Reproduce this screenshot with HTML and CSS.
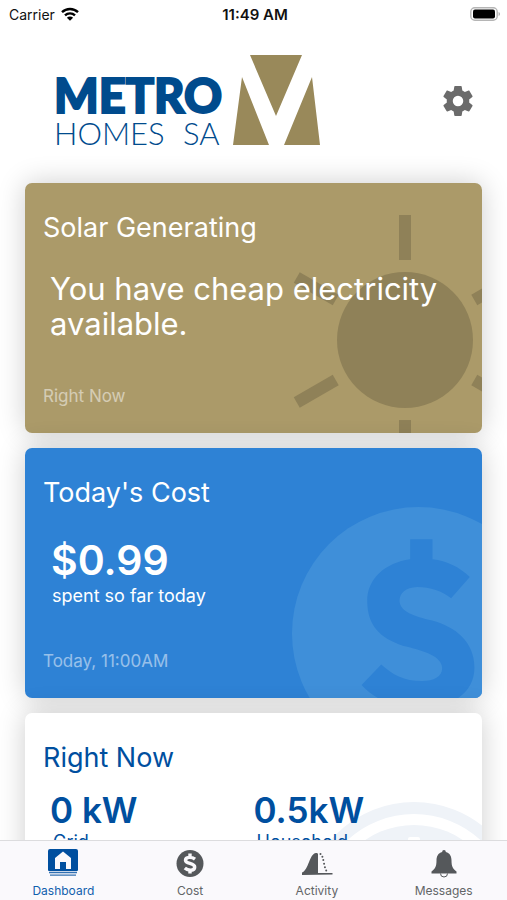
FILE: index.html
```html
<!DOCTYPE html>
<html lang="en">
<head>
<meta charset="utf-8">
<meta name="viewport" content="width=device-width, initial-scale=1">
<title>Metro Homes SA</title>
<link rel="stylesheet" href="styles.css">
</head>
<body>
<div class="status">
  <div class="status-left"><span>Carrier</span>
    <svg class="wifi" viewBox="0 0 18 14" aria-hidden="true"><g fill="none" stroke="#000" stroke-width="2.4"><path d="M1 5.2a11.5 11.5 0 0 1 16 0"/><path d="M4 8.4a7.2 7.2 0 0 1 10 0"/></g><path d="M5.9 10.7a4.4 4.4 0 0 1 6.2 0L9 13.8z"/></svg>
  </div>
  <div class="status-time">11:49 AM</div>
  <div class="status-right">
    <svg class="battery" viewBox="0 0 31 14" aria-hidden="true"><rect x=".8" y=".8" width="26.4" height="12.4" rx="4" fill="#fff" stroke="#b5b5b5" stroke-width="1.4"/><rect x="3" y="2.6" width="22" height="8.8" rx="2"/><path d="M28.6 5v4c1.8-.6 1.8-3.4 0-4z" fill="#aaa"/></svg>
  </div>
</div>
<header class="header">
  <svg class="logo" viewBox="0 0 268 92" role="img" aria-label="Metro Homes SA">
    <text class="logo-metro" x="-2" y="58">METRO</text>
    <text class="logo-homes" x="-2" y="90">HOMES</text>
    <text class="logo-homes" x="127" y="90">SA</text>
    <path fill="#99895a" d="M194 0h52l-26 61zM186 22l27 68h-36zM256 22l8 68h-36z"/>
  </svg>
  <button class="settings" type="button" aria-label="Settings">
    <svg viewBox="0 0 24 24" aria-hidden="true"><path d="M19.43 12.98c.04-.32.07-.64.07-.98s-.03-.66-.07-.98l2.11-1.65c.19-.15.24-.42.12-.64l-2-3.46c-.12-.22-.39-.3-.61-.22l-2.49 1c-.52-.4-1.08-.73-1.69-.98l-.38-2.65A.49.49 0 0 0 14 2h-4c-.25 0-.46.18-.49.42l-.38 2.65c-.61.25-1.17.59-1.69.98l-2.49-1c-.23-.09-.49 0-.61.22l-2 3.46c-.13.22-.07.49.12.64l2.11 1.65c-.04.32-.07.65-.07.98s.03.66.07.98l-2.11 1.65c-.19.15-.24.42-.12.64l2 3.46c.12.22.39.3.61.22l2.49-1c.52.4 1.08.73 1.69.98l.38 2.65c.03.24.24.42.49.42h4c.25 0 .46-.18.49-.42l.38-2.65c.61-.25 1.17-.59 1.69-.98l2.49 1c.23.09.49 0 .61-.22l2-3.46c.12-.22.07-.49-.12-.64zM12 15.5a3.500 3.500 0 1 1 0-7a3.500 3.500 0 0 1 0 7z"/></svg>
  </button>
</header>
<main class="cards">
  <section class="card card-solar">
    <svg class="art art-sun" viewBox="-125 -125 250 250" aria-hidden="true"><circle r="68"/><g id="rays"><path id="ray" d="M-6-125H6v45H-6z"/><use href="#ray" transform="rotate(60)"/><use href="#ray" transform="rotate(120)"/><use href="#ray" transform="rotate(180)"/><use href="#ray" transform="rotate(240)"/><use href="#ray" transform="rotate(300)"/></g></svg>
    <h2>Solar Generating</h2>
    <p class="message">You have cheap electricity available.</p>
    <p class="stamp">Right Now</p>
  </section>
  <section class="card card-cost">
    <svg class="art art-dollar" viewBox="94 200 760 760" aria-hidden="true"><circle cx="474" cy="580" r="380" fill="#3f8fd9"/><path fill="#2e82d5" d="M449 297h67v60C560 362 596 380 628 410L572 474C545 452 510 440 470 440C435 441 417 459 417 482C419 515 460 527 515 541C585 560 642 605 642 682C642 750 590 790 516 802V862H449V802C390 797 340 775 303 735L362 673C395 703 430 723 485 723C520 722 546 710 545 683C543 648 490 633 440 620C370 600 320 565 320 482C320 415 375 367 449 357z"/></svg>
    <h2>Today's Cost</h2>
    <p class="amount">$0.99</p>
    <p class="caption">spent so far today</p>
    <p class="stamp">Today, 11:00AM</p>
  </section>
  <section class="card card-now">
    <svg class="art art-meter" viewBox="-110 -110 220 220" aria-hidden="true"><circle r="104" fill="none" stroke="#eff3f8" stroke-width="12"/><circle r="87" fill="#eff3f8"/><rect x="-6" y="-75" width="12" height="16" rx="2" fill="#fff"/></svg>
    <h2>Right Now</h2>
    <dl class="readings">
      <div><dt>Grid</dt><dd>0 kW</dd></div>
      <div><dt>Household</dt><dd>0.5kW</dd></div>
    </dl>
  </section>
</main>
<nav class="tabs">
  <a class="tab active" href="#dashboard" aria-current="page">
    <svg viewBox="0 0 32 30" aria-hidden="true"><path fill-rule="evenodd" d="M3 0h26a2 2 0 0 1 2 2v19a1 1 0 0 1-1 1H2a1 1 0 0 1-1-1V2a2 2 0 0 1 2-2zM16 2.500L8 9v11h5v-7h6v7h5V9z"/><path opacity=".8" d="M2 22.800h28v1.400H2zM3 25.400h26v1.400H3z"/></svg>
    <span>Dashboard</span></a>
  <a class="tab" href="#cost">
    <svg viewBox="0 0 32 30" aria-hidden="true"><circle cx="16" cy="14.500" r="13.500"/><path fill="none" stroke="#faf9fc" stroke-width="3.400" d="M21 10.200C17.500 7.500 11.500 7.800 11.500 11.300C11.700 15.200 20.700 13.600 20.700 18C20.700 22 14.500 22.300 10.800 19M16 4.500v4M16 20.500v4"/></svg>
    <span>Cost</span></a>
  <a class="tab" href="#activity">
    <svg viewBox="0 0 32 30" aria-hidden="true"><path d="M1 26v-2.500C8 21 8 5 15 4q1.500-.5 2 1v19h14.500v1.500z"/><path fill="none" stroke="#55585b" stroke-width="2" stroke-linecap="round" stroke-dasharray="0 3.500" d="M19.500 5C23 7 22.500 20 27 24"/></svg>
    <span>Activity</span></a>
  <a class="tab" href="#messages">
    <svg viewBox="0 0 32 30" aria-hidden="true"><path d="M16 1c1.200 0 1.800.8 1.800 2C22 4 23.500 7.500 23.500 11.500c0 6 1.500 8.500 5 11v2H3.500v-2c3.500-2.500 5-5 5-11 0-4 1.500-7.500 5.700-8.500 0-1.200.6-2 1.800-2z"/><path fill="none" stroke="#55585b" d="M12.500 24.500a3.500 3.500 0 0 0 7 0"/></svg>
    <span>Messages</span></a>
</nav>
</body>
</html>
```
FILE: styles.css
```css
* { box-sizing: border-box; margin: 0; }
body {
  height: 100vh;
  display: flex;
  flex-direction: column;
  overflow: hidden;
  background: #fff;
  color: #111;
  font-family: Inter, "Liberation Sans", sans-serif;
}
.status {
  flex: none;
  display: grid;
  grid-template-columns: 1fr auto 1fr;
  align-items: center;
  height: 28px;
  padding: 0 6px 0 9px;
  font-size: 14px;
}
.status-left { display: flex; align-items: center; gap: 6px; }
.status-time { font-size: 15px; font-weight: 600; }
.status-right { display: flex; justify-content: flex-end; }
.wifi { width: 18px; height: 14px; }
.battery { width: 31px; height: 14px; }
.header {
  flex: none;
  display: flex;
  align-items: center;
  justify-content: space-between;
  padding: 27px 31px 0 56px;
}
.logo { width: 268px; height: 92px; overflow: visible; }
.logo text { fill: #004b8d; }
.logo-metro {
  font: 900 47px Lato, sans-serif;
  stroke: #004b8d;
  stroke-width: 2px;
}
.logo-homes { font: 300 31px Lato, sans-serif; }
.settings {
  width: 36px;
  height: 36px;
  padding: 0;
  border: 0;
  background: none;
}
.settings svg { display: block; width: 100%; fill: #6b6b6b; }
.cards {
  flex: 1;
  min-height: 0;
  display: flex;
  flex-direction: column;
  gap: 15px;
  padding: 36px 25px 15px;
  overflow-y: auto;
  scrollbar-width: none;
}
.card {
  position: relative;
  flex: none;
  display: flex;
  flex-direction: column;
  min-height: 250px;
  padding: 28px 18px 27px;
  border-radius: 7px;
  overflow: hidden;
  color: #fff;
  box-shadow: 0 0 28px rgba(0, 0, 0, 0.2);
}
.card > * { position: relative; }
.card h2 { font-size: 27px; font-weight: 400; line-height: 34px; }
.card-solar { background: #ab9a69; }
.card-cost { background: #2e82d5; }
.card-now { background: #fff; color: #004f9f; }
.card .art { position: absolute; }
.art-sun { top: 32px; right: -48px; width: 250px; fill: #8f8158; }
.art-dollar { top: 59px; right: -63px; width: 253px; }
.art-meter { top: 89px; right: -42px; width: 220px; }
.message { padding: 26px 7px 0; font-size: 31px; line-height: 35px; }
.amount { padding: 26px 8px 0; font-size: 41px; font-weight: 600; line-height: 48px; }
.caption { padding: 0 9px; font-size: 18px; line-height: 24px; }
.stamp { margin-top: auto; font-size: 17px; line-height: 20px; opacity: 0.5; }
.readings { display: grid; grid-template-columns: 1fr 1fr; padding: 13px 7px 0; }
.readings > div { display: flex; flex-direction: column-reverse; }
.readings dt { padding: 0 3px; font-size: 18px; line-height: 20px; }
.readings dd { font-size: 35px; font-weight: 600; line-height: 44px; }
.tabs {
  position: relative;
  flex: none;
  display: grid;
  grid-template-columns: repeat(4, 1fr);
  height: 60px;
  border-top: 1px solid #dcdcde;
  background: #faf9fc;
}
.tab {
  display: flex;
  flex-direction: column;
  align-items: center;
  gap: 4px;
  padding-top: 8px;
  color: #626567;
  font-size: 12px;
  line-height: 15px;
  text-decoration: none;
}
.tab svg { width: 32px; height: 30px; fill: #55585b; }
.tab.active { color: #1160ad; }
.tab.active svg { fill: #004f9f; }
```
